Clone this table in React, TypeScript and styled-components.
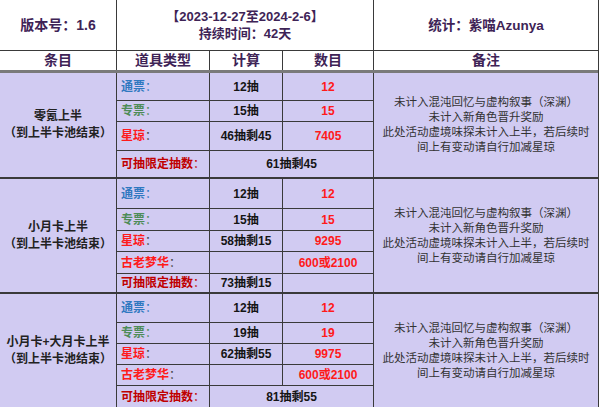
import React from 'react';
import styled, { createGlobalStyle } from 'styled-components';

const Global = createGlobalStyle`
  html, body { margin: 0; padding: 0; background: #ffffff; }
  body { font-family: "Liberation Sans", "Noto Sans CJK SC", sans-serif; }
`;

const COLS = '116px 92px 72px 90px 224px';
const PURPLE = '#d1cbf2';
const LINE = '#3a3a3a';

const Sheet = styled.div`
  width: 598px;
  border-right: 1px solid ${LINE};
  background: ${LINE};
  display: flex;
  flex-direction: column;
  gap: 2px;
`;

const HeaderGrid = styled.div`
  display: grid;
  grid-template-columns: ${COLS};
  grid-template-rows: 50px 19px;
  gap: 1px;
  background: ${LINE};
  border-bottom: 3px solid #7a7a7a;
  margin-bottom: -2px;
`;

const HeadCell = styled.div<{ $span?: number; $size?: number }>`
  grid-column: span ${(p) => p.$span ?? 1};
  background: #ffffff;
  color: #3e2356;
  font-weight: 700;
  font-size: ${(p) => p.$size ?? 14}px;
  line-height: 17px;
  display: flex;
  flex-direction: column;
  align-items: center;
  justify-content: center;
  text-align: center;
  white-space: nowrap;
`;

const Section = styled.div<{ $rows: string }>`
  display: grid;
  grid-template-columns: ${COLS};
  grid-template-rows: ${(p) => p.$rows};
  gap: 1px;
  background: ${LINE};
`;

const Cell = styled.div<{
  $color?: string;
  $left?: boolean;
  $span?: number;
}>`
  grid-column: span ${(p) => p.$span ?? 1};
  background: ${PURPLE};
  display: flex;
  align-items: center;
  justify-content: ${(p) => (p.$left ? 'flex-start' : 'center')};
  padding: 0 ${(p) => (p.$left ? '0 0 4px' : '0')};
  padding-left: ${(p) => (p.$left ? '4px' : '0')};
  color: ${(p) => p.$color ?? '#151515'};
  font-weight: 700;
  font-size: 12px;
  white-space: nowrap;
  line-height: 1;
`;

const TitleCell = styled.div`
  grid-column: 1;
  grid-row: 1 / -1;
  background: ${PURPLE};
  display: flex;
  flex-direction: column;
  align-items: center;
  justify-content: center;
  color: #222222;
  font-weight: 700;
  font-size: 12px;
  line-height: 17px;
  white-space: nowrap;
`;

const NoteCell = styled.div`
  grid-column: 5;
  grid-row: 1 / -1;
  background: ${PURPLE};
  display: flex;
  flex-direction: column;
  align-items: center;
  justify-content: center;
  color: #333333;
  font-size: 11.5px;
  line-height: 15px;
  white-space: nowrap;
`;

const Colon = styled.span<{ $color?: string }>`
  color: ${(p) => p.$color ?? 'inherit'};
  font-weight: 400;
`;

const C = {
  blue: '#2f78c0',
  green: '#4e8c58',
  red: '#ff1a1a',
  dark: '#c00000',
};

const Notes = () => (
  <NoteCell>
    <div>未计入混沌回忆与虚构叙事（深渊）</div>
    <div>未计入新角色晋升奖励</div>
    <div>此处活动虚境味探未计入上半，若后续时</div>
    <div>间上有变动请自行加减星琼</div>
  </NoteCell>
);

const Label = ({ text, color, colon }: { text: string; color: string; colon?: string }) => (
  <Cell $left $color={color}>
    {text}
    <Colon $color={colon}>：</Colon>
  </Cell>
);

export default function App() {
  return (
    <>
      <Global />
      <Sheet>
        <HeaderGrid>
          <HeadCell>版本号：1.6</HeadCell>
          <HeadCell $span={3} $size={13}>
            <div>【2023-12-27至2024-2-6】</div>
            <div>持续时间：42天</div>
          </HeadCell>
          <HeadCell $size={13.5}>统计：紫喵Azunya</HeadCell>
          <HeadCell>条目</HeadCell>
          <HeadCell>道具类型</HeadCell>
          <HeadCell>计算</HeadCell>
          <HeadCell>数目</HeadCell>
          <HeadCell>备注</HeadCell>
        </HeaderGrid>

        <Section $rows="27px 20px 28px 26px">
          <TitleCell>
            <div>零氪上半</div>
            <div>（到上半卡池结束）</div>
          </TitleCell>
          <Label text="通票" color={C.blue} />
          <Cell>12抽</Cell>
          <Cell $color={C.red}>12</Cell>
          <Notes />
          <Label text="专票" color={C.green} />
          <Cell>15抽</Cell>
          <Cell $color={C.red}>15</Cell>
          <Label text="星琼" color={C.red} colon="#444" />
          <Cell>46抽剩45</Cell>
          <Cell $color={C.red}>7405</Cell>
          <Label text="可抽限定抽数" color={C.dark} />
          <Cell $span={2}>61抽剩45</Cell>
        </Section>

        <Section $rows="29px 21px 20px 21px 18px">
          <TitleCell>
            <div>小月卡上半</div>
            <div>（到上半卡池结束）</div>
          </TitleCell>
          <Label text="通票" color={C.blue} />
          <Cell>12抽</Cell>
          <Cell $color={C.red}>12</Cell>
          <Notes />
          <Label text="专票" color={C.green} />
          <Cell>15抽</Cell>
          <Cell $color={C.red}>15</Cell>
          <Label text="星琼" color={C.red} colon="#444" />
          <Cell>58抽剩15</Cell>
          <Cell $color={C.red}>9295</Cell>
          <Label text="古老梦华" color={C.red} colon="#444" />
          <Cell />
          <Cell $color={C.red}>600或2100</Cell>
          <Label text="可抽限定抽数" color={C.dark} />
          <Cell>73抽剩15</Cell>
          <Cell />
        </Section>

        <Section $rows="28px 20px 20px 20px 21px">
          <TitleCell>
            <div>小月卡+大月卡上半</div>
            <div>（到上半卡池结束）</div>
          </TitleCell>
          <Label text="通票" color={C.blue} />
          <Cell>12抽</Cell>
          <Cell $color={C.red}>12</Cell>
          <Notes />
          <Label text="专票" color={C.green} />
          <Cell>19抽</Cell>
          <Cell $color={C.red}>19</Cell>
          <Label text="星琼" color={C.red} colon="#444" />
          <Cell>62抽剩55</Cell>
          <Cell $color={C.red}>9975</Cell>
          <Label text="古老梦华" color={C.red} colon="#444" />
          <Cell />
          <Cell $color={C.red}>600或2100</Cell>
          <Label text="可抽限定抽数" color={C.dark} />
          <Cell $span={2}>81抽剩55</Cell>
        </Section>
      </Sheet>
    </>
  );
}
